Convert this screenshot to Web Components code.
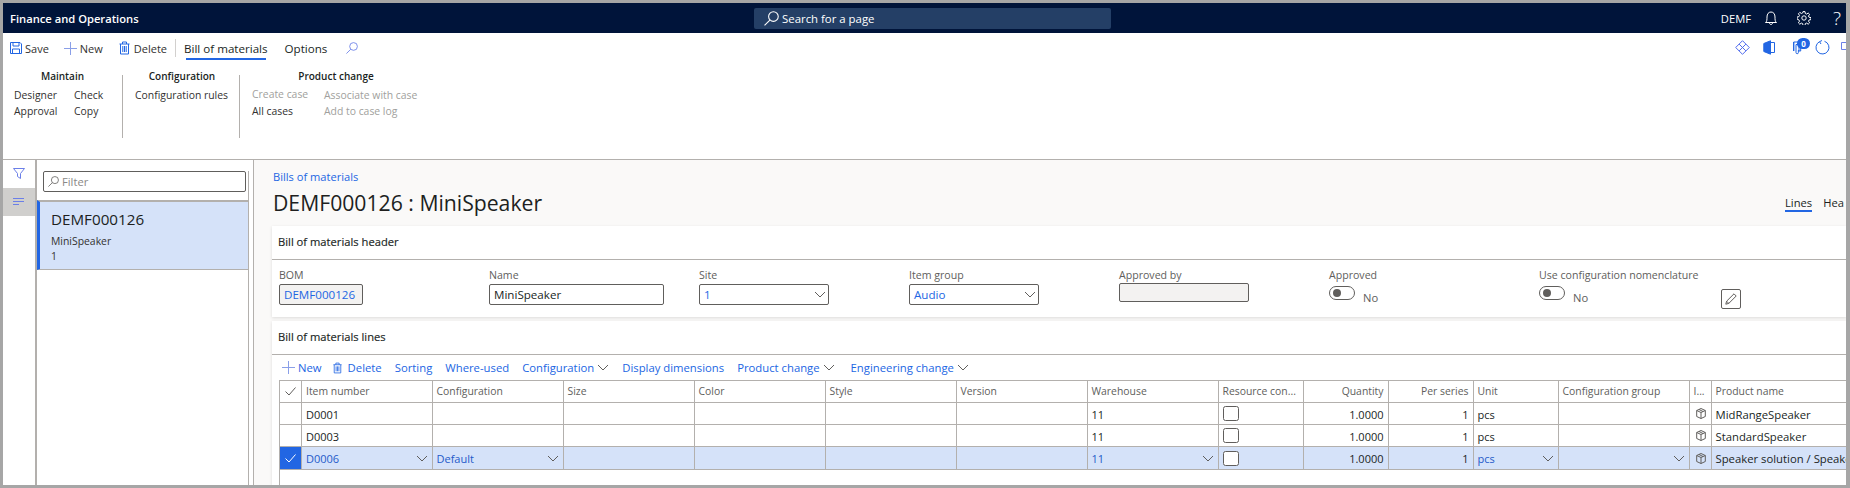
<!DOCTYPE html>
<html lang="en">
<head>
<meta charset="utf-8">
<title>Bill of materials</title>
<style>
    html, body { margin: 0; padding: 0; background: #fff; }
    body { width: 1850px; height: 488px; overflow: hidden; font-family: "Open Sans", "Liberation Sans", sans-serif; }
</style>
</head>
<body>
<fo-app>
    <fo-navbar slot="nav"></fo-navbar>
    <fo-actionpane slot="pane"></fo-actionpane>
    <fo-sidestrip slot="strip"></fo-sidestrip>
    <fo-listpanel slot="list"></fo-listpanel>
    <fo-main slot="main">
        <fo-card heading="Bill of materials header"><fo-header-fields></fo-header-fields></fo-card>
        <fo-card heading="Bill of materials lines"><fo-lines></fo-lines></fo-card>
    </fo-main>
</fo-app>
<script>
    // shared icons
    var CHEVRON = '<svg width="12" height="7" viewBox="0 0 12 7" fill="none" stroke="#605e5c"><path d="M1 1l5 5 5-5"/></svg>';
    var TRASH = function (c, w, h) {
        return '<svg width="' + w + '" height="' + h + '" viewBox="0 0 11 13" fill="none" stroke="' + c + '"><path d="M.5 2.500h10M3.500 2.500V.5h4v2M1.500 2.500v10h8v-10M3.800 4.500v6M5.500 4.500v6M7.200 4.500v6"/></svg>';
    };
    var PLUS = function (c, s) {
        return '<svg width="' + s + '" height="' + s + '" viewBox="0 0 13 13" fill="none" stroke="' + c + '"><path d="M6.500 0v13M0 6.500h13"/></svg>';
    };
    var LENS = function (c, s) {
        return '<svg width="' + s + '" height="' + s + '" viewBox="0 0 14 14" fill="none" stroke="' + c + '"><circle cx="8.800" cy="5.200" r="4.500"/><path d="M5.500 8.500L.5 13.500"/></svg>';
    };

    class FoApp extends HTMLElement {
        constructor() {
            super();
            this.attachShadow({mode: 'open'}).innerHTML = `
            <style>
                :host { display: block; width: 1850px; height: 488px; box-sizing: border-box; background: #fff; position: relative; overflow: hidden;
                    border-top: 3px solid #a6a6a6; border-left: 3px solid #a6a6a6; border-right: 4px solid #a6a6a6; }
                .frame { display: grid; grid-template-columns: 34px 217px 1fr; grid-template-rows: 30px 127px 1fr; width: 1843px; height: 485px; }
                .top { grid-column: 1 / -1; }
                .foot { position: absolute; left: 0; right: 0; bottom: 0; height: 3px; background: #a6a6a6; }
            </style>
            <div class="frame">
                <div class="top"><slot name="nav"></slot></div>
                <div class="top"><slot name="pane"></slot></div>
                <slot name="strip"></slot>
                <slot name="list"></slot>
                <slot name="main"></slot>
            </div>
            <div class="foot"></div>`;
        }
    }

    class FoNavbar extends HTMLElement {
        constructor() {
            super();
            this.attachShadow({mode: 'open'}).innerHTML = `
            <style>
                :host { display: flex; align-items: center; height: 30px; background: #00143a; color: #fff; font-size: 11.2px; }
                .brand { margin-left: 7px; font-weight: 600; font-size: 11.2px; width: 744px; white-space: nowrap; }
                .search { box-sizing: border-box; width: 357px; height: 21px; background: #243f66; border-radius: 2px; display: flex; align-items: center; padding-left: 10px; gap: 3px; font-size: 11.4px; }
                .right { margin-left: auto; display: flex; align-items: center; }
                .co { margin-right: 14px; font-size: 11.2px; }
                .b { margin-right: 20px; display: flex; }
                .g { margin-right: 22px; display: flex; }
                .q { margin-right: 5px; font-size: 19px; line-height: 22px; font-weight: 300; }
            </style>
            <div class="brand">Finance and Operations</div>
            <div class="search">${LENS('#fff', 15)}<span>Search for a page</span></div>
            <div class="right">
                <span class="co">DEMF</span>
                <span class="b"><svg width="12" height="14" viewBox="0 0 12 14" fill="none" stroke="#fff"><path d="M.5 11.500c1.500-1 1.500-3 1.500-5.500C2 3 3.500 1 6 1s4 2 4 5c0 2.500 0 4.500 1.500 5.500zM4.500 11.800c0 1 .6 1.700 1.500 1.700s1.500-.7 1.500-1.700"/></svg></span>
                <span class="g"><svg width="14" height="14" viewBox="0 0 14 14" fill="none" stroke="#fff"><circle cx="7" cy="7" r="2.200"/><path d="M6 .6h2l.3 1.900 1.300.6 1.600-1.100 1.400 1.400-1.100 1.600.6 1.300 1.900.3v2l-1.900.3-.6 1.300 1.100 1.600-1.400 1.400-1.600-1.100-1.300.6-.3 1.900H6l-.3-1.900-1.300-.6-1.600 1.100-1.400-1.400 1.100-1.600-.6-1.300L0 8V6l1.900-.3.6-1.300L1.400 2.800l1.400-1.400 1.600 1.100 1.300-.6z"/></svg></span>
                <span class="q">?</span>
            </div>`;
        }
    }

    class FoActionpane extends HTMLElement {
        constructor() {
            super();
            this.attachShadow({mode: 'open'}).innerHTML = `
            <style>
                :host { display: block; height: 127px; box-sizing: border-box; border-bottom: 1px solid #b3b0ad; background: #fff; position: relative; font-size: 11px; color: #323130; }
                .bar { display: flex; align-items: center; height: 30px; padding-left: 7px; }
                .cmd { display: flex; align-items: center; }
                .cmd svg { display: block; }
                .save { margin-right: 15px; gap: 3px; }
                .new { margin-right: 16px; gap: 3px; }
                .del { gap: 4px; }
                .sep { width: 1px; height: 18px; background: #d2d0ce; margin: 0 8px; }
                .tab { font-size: 11.6px; color: #201f1e; position: relative; margin-right: 17px; }
                .tab.last { margin-right: 19px; }
                .tab.on::after { content: ""; position: absolute; left: 2px; right: 2px; bottom: -4px; height: 2px; background: #2266e3; }
                .groups { display: flex; margin-top: 12px; }
                .group { box-sizing: border-box; height: 63px; }
                .group + .group { border-left: 1px solid #b3b0ad; }
                .group b { display: block; text-align: center; font-weight: 600; font-size: 10px; line-height: 14px; color: #201f1e; margin-top: -6px; white-space: nowrap; }
                .items { display: grid; margin-top: 4px; font-size: 10.4px; line-height: 16px; white-space: nowrap; }
                .off { color: #a19f9d; }
                .up { position: relative; top: -1px; }
                .g1 { width: 119px; padding-left: 11px; }
                .g1 b { width: 97px; }
                .g1 .items { grid-template-columns: 60px 50px; }
                .g2 { width: 117px; padding-left: 12px; }
                .g2 b { width: 94px; }
                .g3 { width: 190px; padding-left: 12px; }
                .g3 b { width: 168px; }
                .g3 .items { grid-template-columns: 72px 110px; }
                .tools { position: absolute; top: 5px; right: 0; height: 18px; width: 115px; overflow: hidden; }
                .tools > * { position: absolute; top: 2px; }
                .tools .badge { top: 0; left: 66px; background: #2266e3; color: #fff; font-size: 8px; font-weight: 700; width: 13px; height: 11px; line-height: 11px; border-radius: 6px; text-align: center; }
            </style>
            <div class="bar">
                <span class="cmd save"><svg width="12" height="12" viewBox="0 0 12 12" fill="none" stroke="#2266e3"><path d="M.5.500h9.500l1.500 1.500v9.500H.5zM3 .5v3.500h6V.5M2.500 11.500V7h7v4.500"/></svg>Save</span>
                <span class="cmd new">${PLUS('#8a9fe8', 13)}New</span>
                <span class="cmd del">${TRASH('#2266e3', 11, 14)}Delete</span>
                <span class="sep"></span>
                <span class="tab on">Bill of materials</span>
                <span class="tab last">Options</span>
                <span class="cmd">${LENS('#6b7fe8', 12)}</span>
            </div>
            <div class="groups">
                <div class="group g1"><b>Maintain</b>
                    <div class="items"><span>Designer</span><span>Check</span><span>Approval</span><span>Copy</span></div></div>
                <div class="group g2"><b>Configuration</b>
                    <div class="items"><span>Configuration rules</span></div></div>
                <div class="group g3"><b>Product change</b>
                    <div class="items"><span class="off up">Create case</span><span class="off">Associate with case</span><span>All cases</span><span class="off">Add to case log</span></div></div>
            </div>
            <div class="tools">
                <svg style="left:4px" width="15" height="15" viewBox="0 0 15 15" fill="none" stroke="#4f6bed"><path d="M7.500.7l6.800 6.800-6.800 6.800L.7 7.500zM4.100 4.100l6.800 6.800M10.900 4.100l-6.800 6.800"/></svg>
                <svg style="left:32px" width="12" height="15" viewBox="0 0 12 15" fill="none" stroke="#2266e3"><path d="M.8 3.500L7.500.8v13.400L.8 11.500z" fill="#2266e3"/><path d="M7.500 2.500h4v10h-4"/></svg>
                <svg style="left:62px" width="9" height="15" viewBox="0 0 9 15" fill="none" stroke="#2266e3"><path d="M.7 2h7v9H6V4.500H3V12.500a1.200 1.200 0 0 0 2.400 0V10"/><path d="M.7 2v9" stroke-width="1.400"/></svg>
                <span class="badge">0</span>
                <svg style="left:84px" width="15" height="15" viewBox="0 0 15 15" fill="none" stroke="#2266e3"><path d="M9.500 1.300A6.500 6.500 0 1 1 4.500 1.700M4.500 1.700L7 .5M4.500 1.700L6 4"/></svg>
                <svg style="left:110px" width="5" height="12" viewBox="0 0 5 12" fill="none" stroke="#6b7fe8"><path d="M.5 2.500h8v7h-8z"/></svg>
            </div>`;
        }
    }

    class FoSidestrip extends HTMLElement {
        constructor() {
            super();
            this.attachShadow({mode: 'open'}).innerHTML = `
            <style>
                :host { display: block; background: #fff; border-right: 2px solid #b3b0ad; padding-top: 8px; box-sizing: border-box; height: 100%; }
                .f { display: flex; justify-content: center; height: 20px; align-items: flex-start; }
                .on { height: 28px; background: #d0cfcd; display: flex; align-items: center; justify-content: center; }
            </style>
            <div class="f"><svg width="12" height="11" viewBox="0 0 12 11" fill="none" stroke="#6b7fe8"><path d="M.5.500h11L7.500 5.500v5l-3-2v-3z"/></svg></div>
            <div class="on"><svg width="12" height="8" viewBox="0 0 12 8" fill="none" stroke="#6b7fe8"><path d="M0 .5h11M0 3.500h11M0 6.500h6"/></svg></div>`;
        }
    }

    class FoListpanel extends HTMLElement {
        constructor() {
            super();
            this.attachShadow({mode: 'open'}).innerHTML = `
            <style>
                :host { display: block; background: #fff; box-sizing: border-box; height: 100%; padding-top: 11px; border-right: 1px solid #b3b0ad; color: #323130; }
                .wrap { width: 211px; border-right: 1px solid #b3b0ad; height: 100%; }
                .filter { box-sizing: border-box; margin-left: 6px; width: 203px; height: 21px; border: 1px solid #605e5c; border-radius: 2px; display: flex; align-items: center; padding-left: 4px; gap: 3px; font-size: 11.2px; color: #8a8886; }
                .card { box-sizing: border-box; margin-top: 8px; height: 70px; background: #d5e2f9; border-left: 3px solid #2266e3; border-top: 2px solid #b3b0ad; border-bottom: 1px solid #b3b0ad; padding: 7px 0 0 11px; }
                .t { font-size: 15.200px; line-height: 20px; color: #201f1e; }
                .s { font-size: 10.400px; line-height: 15px; margin-top: 5px; }
            </style>
            <div class="wrap">
                <div class="filter">${LENS('#605e5c', 11)}<span>Filter</span></div>
                <div class="card">
                    <div class="t">DEMF000126</div>
                    <div class="s">MiniSpeaker<br>1</div>
                </div>
            </div>`;
        }
    }

    class FoMain extends HTMLElement {
        constructor() {
            super();
            this.attachShadow({mode: 'open'}).innerHTML = `
            <style>
                :host { display: block; background: #faf9f8; box-sizing: border-box; height: 100%; padding: 9px 0 0 18px; position: relative; overflow: hidden; }
                .crumb { margin-left: 1px; font-size: 11.100px; line-height: 15px; color: #2266e3; }
                h1 { margin: 4px 0 0 1px; font-size: 21.200px; line-height: 30px; font-weight: 400; color: #201f1e; height: 38px; }
                .tabs { position: absolute; top: 36px; left: 1531px; display: flex; font-size: 11.2px; gap: 11px; color: #201f1e; width: 59px; overflow: hidden; }
                .tabs .on { border-bottom: 2px solid #2266e3; height: 14px; line-height: 14px; }
                .tabs span { line-height: 14px; }
                .cards { display: flex; flex-direction: column; gap: 4px; }
            </style>
            <div class="crumb">Bills of materials</div>
            <h1>DEMF000126 : MiniSpeaker</h1>
            <div class="tabs"><span class="on">Lines</span><span>Header</span></div>
            <div class="cards"><slot></slot></div>`;
        }
    }

    class FoCard extends HTMLElement {
        constructor() {
            super();
            this.attachShadow({mode: 'open'}).innerHTML = `
            <style>
                :host { display: block; background: #fff; box-shadow: 0 1px 3px rgba(0,0,0,.12); }
                .hd { box-sizing: border-box; height: 34px; line-height: 32px; padding-left: 6px; font-size: 11.2px; color: #201f1e; border-bottom: 1px solid #b3b0ad; -webkit-text-stroke: .15px #201f1e; }
            </style>
            <div class="hd">${this.getAttribute('heading')}</div>
            <slot></slot>`;
        }
    }

    class FoField extends HTMLElement {
        constructor() {
            super();
            var input = this.getAttribute('value') || '';
            var kind = this.getAttribute('kind') || '';
            var w = this.getAttribute('w');
            this.attachShadow({mode: 'open'}).innerHTML = `
            <style>
                :host { display: block; font-size: 10.600px; color: #605e5c; }
                .l { line-height: 14px; height: 16px; padding-top: 1px; white-space: nowrap; }
                .i { box-sizing: border-box; width: ${w}px; height: 21px; border: 1px solid #605e5c; border-radius: 2px; padding: 0 0 0 4px; display: flex; align-items: center; justify-content: space-between; font-size: 11.600px; color: #201f1e; }
                .link { color: #2266e3; }
                .grey { background: #f3f2f1; }
                .i svg { margin-right: 2px; }
                .tg { display: flex; align-items: flex-start; margin-top: 2px; gap: 8px; }
                .sw { box-sizing: border-box; width: 26px; height: 14px; border: 1px solid #605e5c; border-radius: 7px; padding: 2px; }
                .sw i { display: block; width: 8px; height: 8px; margin: 0 0 0 1px; border-radius: 50%; background: #605e5c; }
                .no { margin-top: 4px; font-size: 11.200px; line-height: 15px; }
            </style>
            <div class="l">${this.getAttribute('label')}</div>
            ${kind === 'toggle'
                ? '<div class="tg"><div class="sw"><i></i></div><div class="no">No</div></div>'
                : '<div class="i ' + kind + '" style="' + (kind.indexOf('short') >= 0 ? 'height:19px;margin-top:-1px' : '') + '"><span>' + input + '</span>' + (kind.indexOf('combo') >= 0 ? CHEVRON : '') + '</div>'}`;
        }
    }

    class FoHeaderFields extends HTMLElement {
        constructor() {
            super();
            this.attachShadow({mode: 'open'}).innerHTML = `
            <style>
                :host { display: grid; grid-template-columns: 210px 210px 210px 210px 210px 210px 182px 100px; height: 57px; padding: 7px 0 0 7px; box-sizing: border-box; }
                .pen { box-sizing: border-box; width: 20px; height: 20px; border: 1px solid #605e5c; border-radius: 2px; margin-top: 22px; display: flex; align-items: center; justify-content: center; }
            </style>
            <fo-field label="BOM" value="DEMF000126" kind="link grey" w="84"></fo-field>
            <fo-field label="Name" value="MiniSpeaker" w="175"></fo-field>
            <fo-field label="Site" value="1" kind="link combo" w="130"></fo-field>
            <fo-field label="Item group" value="Audio" kind="link combo" w="130"></fo-field>
            <fo-field label="Approved by" kind="grey short" w="130"></fo-field>
            <fo-field label="Approved" kind="toggle"></fo-field>
            <fo-field label="Use configuration nomenclature" kind="toggle"></fo-field>
            <div class="pen"><svg width="12" height="12" viewBox="0 0 12 12" fill="none" stroke="#605e5c"><path d="M.8 11.200l.8-3L9 .8l2.200 2.200-7.400 7.400zM1.600 8.200l2.200 2.200"/></svg></div>`;
        }
    }

    var GRID_COLS = '22px 130.5px 131px 131px 131px 131px 131px 131px 85px 85px 85px 85px 131px 22px 135px';
    var GRID_HEAD = [['', ''], ['Item number'], ['Configuration'], ['Size'], ['Color'], ['Style'], ['Version'], ['Warehouse'], ['Resource con...'], ['Quantity', 'r'], ['Per series', 'r'], ['Unit'], ['Configuration group'], ['I...'], ['Product name']];
    var GRID_ROWS = [
        {item: 'D0001', name: 'MidRangeSpeaker'},
        {item: 'D0003', name: 'StandardSpeaker'},
        {item: 'D0006', name: 'Speaker solution / Speaker', active: true, config: 'Default'}
    ];

    class FoLines extends HTMLElement {
        constructor() {
            super();
            var cell = function (cls, txt, combo) {
                return '<div class="c ' + cls + '"><span>' + (txt || '') + '</span>' + (combo ? CHEVRON : '') + '</div>';
            };
            var box = '<svg width="16" height="15" viewBox="0 0 16 15"><rect x=".5" y=".5" width="15" height="14" rx="2" fill="#fff" stroke="#605e5c"/></svg>';
            var cube = '<svg width="10" height="11" viewBox="0 0 10 11" fill="none" stroke="#605e5c"><path d="M5 .5l4.300 2v6L5 10.500.7 8.500v-6zM.7 2.500L5 4.500l4.300-2M5 4.500v6M3 1.500l4 2"/></svg>';
            var tick = function (c) {
                return '<svg width="11" height="9" viewBox="0 0 11 9" fill="none" stroke="' + c + '"><path d="M.5 4.500L4 8l6.500-7.500"/></svg>';
            };
            var head = GRID_HEAD.map(function (h, i) {
                return i == 0 ? '<div class="c h sel">' + tick('#605e5c') + '</div>' : cell('h ' + (h[1] || ''), h[0]);
            }).join('');
            var rows = GRID_ROWS.map(function (r) {
                var a = r.active;
                var out = '<div class="c sel ' + (a ? 'tick' : '') + '">' + (a ? tick('#fff') : '') + '</div>';
                out += cell('', r.item, a) + cell('', r.config, a);
                out += cell('') + cell('') + cell('') + cell('');
                out += cell('', '11', a);
                out += '<div class="c box">' + box + '</div>';
                out += cell('r', '1.0000') + cell('r', '1') + cell('pcs', 'pcs', a) + cell('', '', a);
                out += '<div class="c ic">' + cube + '</div>' + cell('name', r.name);
                return '<div class="row data ' + (a ? 'active' : '') + '">' + out + '</div>';
            }).join('');
            this.attachShadow({mode: 'open'}).innerHTML = `
            <style>
                :host { display: block; height: 130px; padding-left: 7px; box-sizing: border-box; font-size: 11px; color: #201f1e; overflow: hidden; }
                .cmds { display: flex; align-items: center; height: 25px; padding-left: 3px; color: #2266e3; font-size: 11.300px; white-space: nowrap; }
                .cmds span { display: flex; align-items: center; margin-right: 13px; }
                .grid { border-left: 1px solid #b3b0ad; border-top: 1px solid #b3b0ad; height: 105px; width: 1566px; }
                .row { display: grid; grid-template-columns: ${GRID_COLS}; height: 22px; box-sizing: border-box; border-bottom: 1px solid #b3b0ad; }
                .row.active { background: #d5e2f9; height: 23px; color: #1f5bc9; }
                .c { box-sizing: border-box; border-right: 1px solid #b3b0ad; padding: 0 4px 1px; display: flex; align-items: center; justify-content: space-between; white-space: nowrap; overflow: hidden; min-width: 0; }
                .data .c { padding: 1px 4px 0; }
                .c.r { justify-content: flex-end; }
                .c.h { color: #605e5c; font-size: 10.400px; }
                .c.sel, .data .c.sel { padding: 0; justify-content: center; }
                .c.tick { background: #2266e3; }
                .data .c.box, .data .c.ic { padding: 0 0 0 4px; justify-content: flex-start; }
                .data .c.ic { padding-left: 6px; }
                .active .c.r, .active .c.name { color: #201f1e; }
                .c.name { border-right: 0; color: #201f1e; justify-content: flex-start; font-size: 11.300px; }
                .c svg { flex: none; }
            </style>
            <div class="cmds">
                <span style="margin-right:11px;gap:3px">${PLUS('#8a9fe8', 13)}New</span>
                <span style="gap:6px">${TRASH('#2266e3', 9, 12)}Delete</span>
                <span>Sorting</span>
                <span>Where-used</span>
                <span style="gap:3px">Configuration ${CHEVRON}</span>
                <span>Display dimensions</span>
                <span style="gap:3px;margin-right:16px">Product change ${CHEVRON}</span>
                <span style="gap:3px">Engineering change ${CHEVRON}</span>
            </div>
            <div class="grid">
                <div class="row">${head}</div>
                ${rows}
            </div>`;
        }
    }

    customElements.define('fo-app', FoApp);
    customElements.define('fo-navbar', FoNavbar);
    customElements.define('fo-actionpane', FoActionpane);
    customElements.define('fo-sidestrip', FoSidestrip);
    customElements.define('fo-listpanel', FoListpanel);
    customElements.define('fo-main', FoMain);
    customElements.define('fo-card', FoCard);
    customElements.define('fo-field', FoField);
    customElements.define('fo-header-fields', FoHeaderFields);
    customElements.define('fo-lines', FoLines);
</script>
</body>
</html>
